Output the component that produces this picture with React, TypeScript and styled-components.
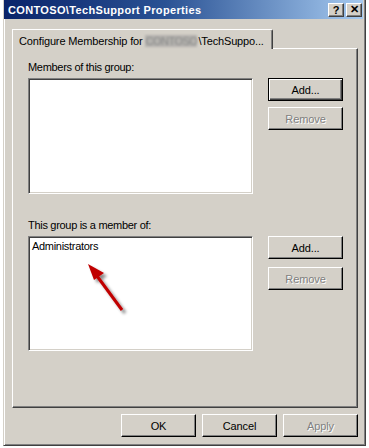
import { FC } from 'react';
import styled, { createGlobalStyle } from 'styled-components';

const GlobalStyle = createGlobalStyle`
  body {
    margin: 0;
    font-family: 'Liberation Sans', Arial, sans-serif;
    font-size: 11px;
  }
  * {
    box-sizing: border-box;
  }
`;

const FACE = '#d4d0c8';

const App: FC = () => {
  return (
    <Page>
      <GlobalStyle />
      <Window>
        <TitleBar>
          <TitleText>CONTOSO\TechSupport Properties</TitleText>
          <CaptionButtons>
            <CaptionButton>?</CaptionButton>
            <CaptionButton>✕</CaptionButton>
          </CaptionButtons>
        </TitleBar>
        <Body>
          <TabStrip>
            <Tab>
              Configure Membership for <Redacted>CONTOSO</Redacted>\TechSuppo...
            </Tab>
          </TabStrip>
          <Panel>
            <Section>
              <Label>Members of this group:</Label>
              <Row>
                <ListBox $height={116} />
                <ButtonColumn $gap={6}>
                  <Button $default>Add...</Button>
                  <Button disabled>Remove</Button>
                </ButtonColumn>
              </Row>
            </Section>
            <Section>
              <Label>This group is a member of:</Label>
              <Row>
                <ListBox $height={115}>
                  <ListItem>Administrators</ListItem>
                  <Arrow width="110" height="90" viewBox="0 0 110 90">
                    <defs>
                      <filter id="shadow" x="-30%" y="-30%" width="160%" height="160%">
                        <feDropShadow dx="3" dy="3" stdDeviation="1.6" floodColor="#000" floodOpacity="0.45" />
                      </filter>
                    </defs>
                    <g filter="url(#shadow)">
                      <line x1="69" y1="40" x2="94" y2="74" stroke="#c00000" strokeWidth="3" />
                      <polygon points="60,28 76,37 66,44" fill="#c00000" />
                    </g>
                  </Arrow>
                </ListBox>
                <ButtonColumn $gap={8}>
                  <Button>Add...</Button>
                  <Button disabled>Remove</Button>
                </ButtonColumn>
              </Row>
            </Section>
          </Panel>
          <Footer>
            <Button>OK</Button>
            <Button>Cancel</Button>
            <Button disabled>Apply</Button>
          </Footer>
        </Body>
      </Window>
    </Page>
  );
};

const Page = styled.div`
  width: 369px;
  height: 448px;
  overflow: hidden;
  background: #fff;
  display: flex;
  padding-left: 3px;
`;
const Window = styled.div`
  width: 363px;
  height: 446px;
  display: flex;
  flex-direction: column;
  background: ${FACE};
  border-left: 1px solid ${FACE};
  border-right: 1px solid #404040;
  border-bottom: 1px solid #404040;
  box-shadow: inset 1px 0 #fff, inset -1px -1px #808080;
  padding-right: 2px;
`;
const TitleBar = styled.div`
  height: 19px;
  display: flex;
  align-items: center;
  padding: 0 1px 0 4px;
  background: linear-gradient(90deg, #0a246a 0%, #2a5294 45%, #a6caf0 100%);
  color: #fff;
`;
const TitleText = styled.div`
  font-weight: bold;
  font-size: 11px;
  letter-spacing: 0.35px;
`;
const CaptionButtons = styled.div`
  margin-left: auto;
  display: flex;
  gap: 2px;
`;
const CaptionButton = styled.div`
  width: 16px;
  height: 14px;
  display: flex;
  align-items: center;
  justify-content: center;
  background: ${FACE};
  color: #000;
  font-weight: bold;
  font-size: 11px;
  border-top: 1px solid #fff;
  border-left: 1px solid #fff;
  border-right: 1px solid #404040;
  border-bottom: 1px solid #404040;
  box-shadow: inset -1px -1px #808080;
`;
const Body = styled.div`
  display: flex;
  flex-direction: column;
  padding: 10px 0 0 8px;
  width: 354px;
`;
const TabStrip = styled.div`
  display: flex;
  position: relative;
  z-index: 1;
  margin-bottom: -1px;
`;
const Tab = styled.div`
  width: 261px;
  height: 20px;
  padding: 5px 0 0 6px;
  background: ${FACE};
  border-top: 1px solid #fff;
  border-left: 1px solid #fff;
  border-right: 1px solid #404040;
  box-shadow: inset -1px 0 #808080;
  border-top-right-radius: 2px;
  color: #000;
  letter-spacing: -0.15px;
  white-space: nowrap;
`;
const Redacted = styled.span`
  display: inline-block;
  color: #8a8a8a;
  background: #b4b2ae;
  filter: blur(1.3px);
  letter-spacing: -0.5px;
  margin-right: 1px;
`;
const Panel = styled.div`
  width: 346px;
  height: 360px;
  display: flex;
  flex-direction: column;
  gap: 24px;
  padding: 11px 0 0 15px;
  border-top: 1px solid #fff;
  border-left: 1px solid #fff;
  border-right: 1px solid #404040;
  border-bottom: 1px solid #404040;
  box-shadow: inset -1px -1px #808080;
`;
const Section = styled.div`
  display: flex;
  flex-direction: column;
  gap: 4px;
`;
const Label = styled.div`
  line-height: 14px;
  height: 14px;
  color: #000;
  letter-spacing: -0.3px;
`;
const Row = styled.div`
  display: flex;
  gap: 15px;
  align-items: flex-start;
`;
const ListBox = styled.div<{ $height: number }>`
  position: relative;
  width: 225px;
  height: ${(p) => p.$height}px;
  background: #fff;
  border-top: 1px solid #808080;
  border-left: 1px solid #808080;
  border-right: 1px solid #fff;
  border-bottom: 1px solid #fff;
  box-shadow: inset 1px 1px #404040, inset -1px -1px ${FACE};
  padding: 3px 3px;
`;
const ListItem = styled.div`
  line-height: 13px;
  color: #000;
  letter-spacing: -0.3px;
`;
const Arrow = styled.svg`
  position: absolute;
  left: -1px;
  top: -1px;
`;
const ButtonColumn = styled.div<{ $gap: number }>`
  display: flex;
  flex-direction: column;
  gap: ${(p) => p.$gap}px;
`;
const Button = styled.button<{ $default?: boolean }>`
  width: 75px;
  height: 23px;
  padding: 0;
  margin: 0;
  font-family: 'Liberation Sans', Arial, sans-serif;
  font-size: 11px;
  letter-spacing: -0.1px;
  color: #000;
  background: ${FACE};
  border-radius: 0;
  border-top: 1px solid ${(p) => (p.$default ? '#000' : '#fff')};
  border-left: 1px solid ${(p) => (p.$default ? '#000' : '#fff')};
  border-right: 1px solid #000;
  border-bottom: 1px solid #000;
  box-shadow: ${(p) =>
    p.$default
      ? 'inset 1px 1px #fff, inset -1px -1px #404040, inset -2px -2px #808080'
      : 'inset -1px -1px #808080'};
  &:disabled {
    color: #808080;
    text-shadow: 1px 1px 0 #fff;
  }
`;
const Footer = styled.div`
  display: flex;
  justify-content: flex-end;
  gap: 6px;
  margin-top: 6px;
  width: 346px;
`;

export default App;
